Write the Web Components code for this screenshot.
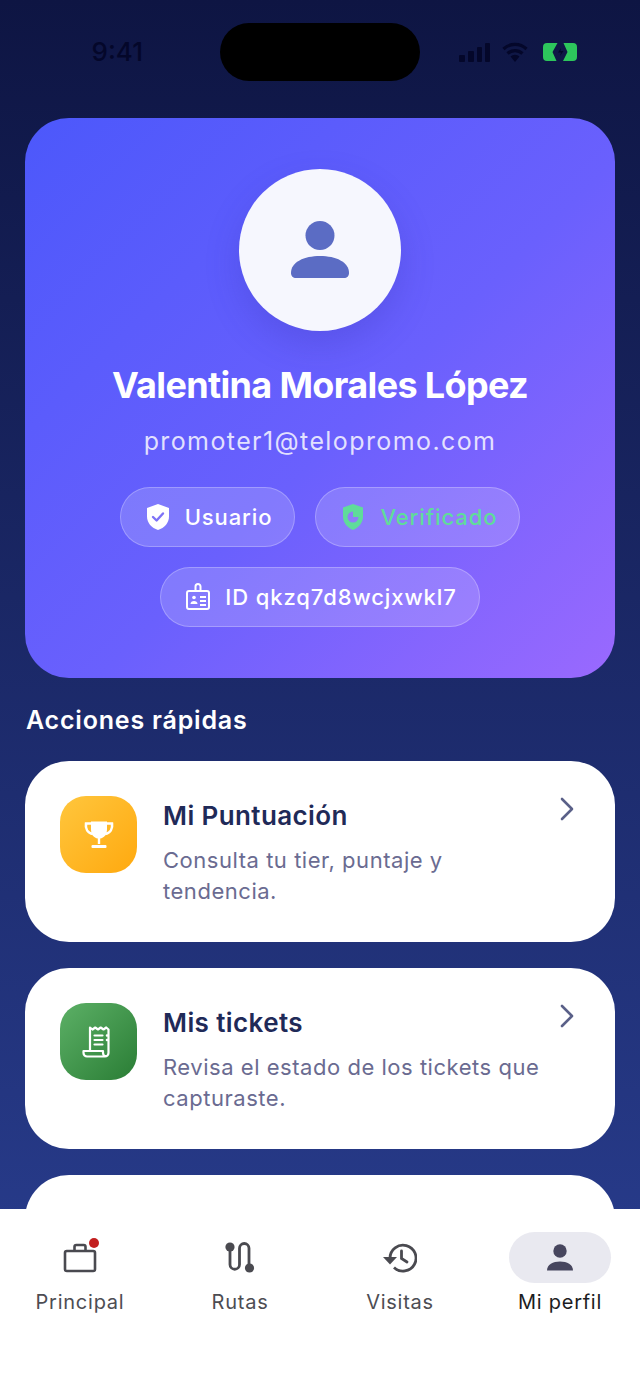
<!DOCTYPE html>
<html lang="es">
<head>
<meta charset="utf-8">
<title>Mi perfil</title>
<style>
  html, body { margin: 0; padding: 0; height: 100%; }
  body { font-family: Inter, "Liberation Sans", sans-serif; overflow: hidden; }
  [slot="icon"] { display: block; }
</style>
</head>
<body>
<profile-screen>
  <status-bar slot="status"></status-bar>

  <profile-hero slot="hero" name="Valentina Morales López" email="promoter1@telopromo.com">
    <info-pill>
      <svg slot="icon" width="26" height="28" viewBox="0 0 26 28"><path fill="#fff" d="M13 1 24 5v8.500c0 6.500-4.600 11.400-11 13.500C6.600 24.900 2 20 2 13.500V5z"/><path fill="none" stroke="#7d72f7" stroke-width="2.400" stroke-linecap="round" stroke-linejoin="round" d="m8 14 3.600 3.500L18 10.500"/></svg>
      Usuario
    </info-pill>
    <info-pill tone="ok">
      <svg slot="icon" width="26" height="28" viewBox="0 0 26 28"><path fill="#5fdc9a" d="M13 1 23 4.500v9c0 6.300-4.200 10.900-10 13.500C7.200 24.400 3 19.800 3 13.500v-9z"/><path fill="#8d7ff8" d="M13 8.500a5.500 5.500 0 1 0 5.500 5.500H13z"/></svg>
      Verificado
    </info-pill>
    <info-pill>
      <svg slot="icon" width="26" height="28" viewBox="0 0 26 28" fill="none" stroke="#fff" stroke-width="2"><rect x="2" y="8" width="22" height="18" rx="2"/><path d="M10.500 8V3.500a2.500 2.500 0 0 1 5 0V8"/><circle cx="9" cy="14.500" r="1.800" fill="#fff" stroke="none"/><path stroke="none" fill="#fff" d="M5.500 21c0-2 1.500-3 3.500-3s3.500 1 3.500 3z"/><path stroke-width="1.800" d="M15 14h6M15 18h6M15 22h6"/></svg>
      ID qkzq7d8wcjxwkl7
    </info-pill>
  </profile-hero>

  <span slot="section">Acciones rápidas</span>

  <action-card slot="actions" heading="Mi Puntuación" tone="gold">
    <svg slot="icon" width="32" height="32" viewBox="0 0 32 32"><path fill="none" stroke="#fff" stroke-width="2.600" d="M9 4.500H3c-.8 5 1.500 9.500 7 10.500M23 4.500h6c.8 5-1.500 9.500-7 10.500"/><path fill="#fff" d="M8 2.500h16V10c0 5.500-3 9-6.800 9.600V25h-2.400v-5.400C11 19 8 15.500 8 10z"/><rect x="8.500" y="26" width="15" height="3" rx="1" fill="#fff"/></svg>
    Consulta tu tier, puntaje y tendencia.
  </action-card>
  <action-card slot="actions" heading="Mis tickets" tone="green">
    <svg slot="icon" width="34" height="34" viewBox="0 0 34 34" fill="none" stroke="#fff" stroke-width="2.200" stroke-linejoin="round"><path d="M8 26V2.500l2.500 2 2.700-2 2.800 2 2.700-2 2.800 2 2.700-2 2.300 2V28a3.500 3.500 0 0 1-3.500 3.500H5a3.500 3.500 0 0 1-3.500-3.500v-2H21v2a3.500 3.500 0 0 0 3.500 3.500"/><path stroke-linecap="round" d="M12.500 10.500h8M12.500 15h8M12.500 19.500h8"/><path stroke-linecap="round" stroke-width="2.600" d="M25 10.500h.1M25 15h.1"/></svg>
    Revisa el estado de los tickets que capturaste.
  </action-card>
  <action-card slot="actions"></action-card>

  <bottom-nav slot="nav">
    <nav-item label="Principal" badge>
      <svg slot="icon" width="34" height="30" viewBox="0 0 34 30" fill="none" stroke="#4a4a50" stroke-width="2.600" stroke-linejoin="round"><rect x="2" y="8" width="30" height="20" rx="1.800"/><path d="M11.500 8V3.800c0-1 .8-1.800 1.800-1.800h7.400c1 0 1.800.8 1.800 1.800V8"/></svg>
    </nav-item>
    <nav-item label="Rutas">
      <svg slot="icon" width="30" height="32" viewBox="0 0 30 32" fill="none" stroke="#4a4a50" stroke-width="2.800" stroke-linecap="round"><path d="M5 5v17.500a4.750 4.750 0 0 0 9.500 0V6.250a4.750 4.750 0 0 1 9.500 0V26"/><circle cx="5" cy="5" r="4.600" fill="#4a4a50" stroke="none"/><circle cx="24.500" cy="26" r="4.600" fill="#4a4a50" stroke="none"/></svg>
    </nav-item>
    <nav-item label="Visitas">
      <svg slot="icon" width="34" height="30" viewBox="0 0 34 30" fill="none" stroke="#4a4a50" stroke-width="2.800"><path d="M7 15a13 13 0 1 1 4 9.500"/><path fill="#4a4a50" stroke="none" d="M0 14h14l-7 7.500z"/><path stroke-linecap="round" d="M18.500 8v7.500l5.500 3.500"/></svg>
    </nav-item>
    <nav-item label="Mi perfil" active>
      <svg slot="icon" width="28" height="28" viewBox="0 0 28 28" fill="#47465e"><circle cx="14" cy="7" r="6.700"/><path d="M1 26.500c0-6 6-9 13-9s13 3 13 9z"/></svg>
    </nav-item>
  </bottom-nav>
</profile-screen>

<script>
// pantalla completa, el contenido se corta donde empieza la barra inferior
class ProfileScreen extends HTMLElement {
  constructor() {
    super();
    this.attachShadow({ mode: 'open' }).innerHTML = `
      <style>
        :host {
          display: flex;
          flex-direction: column;
          height: 1391px;
          background: linear-gradient(180deg, #0e1543 0%, #2a3f92 100%);
          overflow: hidden;
        }
        .content {
          flex: 1;
          min-height: 0;
          overflow: hidden;
          display: flex;
          flex-direction: column;
          padding: 0 25px 0 26px;
        }
        .title {
          color: #fff;
          font: 600 25px/28px Inter, sans-serif;
          letter-spacing: .8px;
          margin: 28px 0 27px;
        }
        .list { display: flex; flex-direction: column; gap: 26px; }
      </style>
      <slot name="status"></slot>
      <div class="content">
        <slot name="hero"></slot>
        <div class="title"><slot name="section"></slot></div>
        <div class="list"><slot name="actions"></slot></div>
      </div>
      <slot name="nav"></slot>`;
  }
}

class StatusBar extends HTMLElement {
  constructor() {
    super();
    this.attachShadow({ mode: 'open' }).innerHTML = `
      <style>
        :host {
          display: grid;
          grid-template-columns: 220px 200px 220px;
          height: 118px;
          box-sizing: border-box;
          padding-top: 23px;
          flex: none;
        }
        .time {
          color: #04072a;
          font: 500 26px/58px Inter, sans-serif;
          text-align: right;
          padding-right: 77px;
        }
        .island { height: 58px; border-radius: 29px; background: #000; }
        .icons { display: flex; align-items: center; height: 58px; padding-left: 39px; }
        .wifi { margin-left: 11px; }
        .battery { margin-left: 15px; }
      </style>
      <div class="time">9:41</div>
      <div class="island"></div>
      <div class="icons">
        <svg width="32" height="20" viewBox="0 0 32 20" fill="#04072a"><rect x="0" y="13" width="6" height="7" rx="1"/><rect x="9" y="9" width="6" height="11" rx="1"/><rect x="18" y="5" width="5" height="15" rx="1"/><rect x="26" y="1" width="5" height="19" rx="1"/></svg>
        <svg class="wifi" width="26" height="20" viewBox="0 0 26 20" fill="none" stroke="#04072a" stroke-width="3.200"><path d="M1.500 7a16.500 16.500 0 0 1 23 0M5.500 11.500a11 11 0 0 1 15 0"/><path fill="#04072a" stroke="none" d="M8.500 14.500a6.500 6.500 0 0 1 9 0L13 20z"/></svg>
        <svg class="battery" width="34" height="18" viewBox="0 0 34 18"><path fill="#2dc65c" d="M4 0h10.500L9.500 9l4 9H4a4 4 0 0 1-4-4V4a4 4 0 0 1 4-4zM20.500 0H30a4 4 0 0 1 4 4v10a4 4 0 0 1-4 4H20l4.500-9z"/><path fill="#04072a" d="M18 5l-3 4.500h3l-1 3.500 3.500-5h-3z"/></svg>
      </div>`;
  }
}

// tarjeta azul con avatar, nombre y correo
class ProfileHero extends HTMLElement {
  constructor() {
    super();
    this.attachShadow({ mode: 'open' }).innerHTML = `
      <style>
        :host {
          display: flex;
          flex-direction: column;
          align-items: center;
          flex: none;
          height: 560px;
          box-sizing: border-box;
          padding-top: 51px;
          margin-left: -1px;
          border-radius: 44px;
          background: linear-gradient(135deg, #4c58fb 0%, #6a60fd 55%, #9a69fe 100%);
        }
        .avatar {
          width: 162px;
          height: 162px;
          border-radius: 50%;
          background: #f6f7fe;
          box-shadow: 0 14px 34px rgba(48, 44, 170, .22);
          display: flex;
          align-items: center;
          justify-content: center;
        }
        .name {
          color: #fff;
          font: 700 36px/40px Inter, sans-serif;
          letter-spacing: -.65px;
          margin-top: 34px;
        }
        .email {
          color: rgba(255, 255, 255, .82);
          font: 400 25px/30px Inter, sans-serif;
          letter-spacing: 1.4px;
          margin-top: 21px;
        }
        .pills {
          display: flex;
          flex-wrap: wrap;
          justify-content: center;
          gap: 20px;
          width: 440px;
          margin-top: 31px;
        }
      </style>
      <div class="avatar">
        <svg width="58" height="58" viewBox="0 0 58 58" fill="#5b6cc4"><circle cx="29" cy="14.500" r="14.500"/><path d="M0 52c0-11 13-17 29-17s29 6 29 17c0 3-2 5-5 5H5c-3 0-5-2-5-5z"/></svg>
      </div>
      <div class="name"></div>
      <div class="email"></div>
      <div class="pills"><slot></slot></div>`;
  }
  connectedCallback() {
    this.shadowRoot.querySelector('.name').textContent = this.getAttribute('name');
    this.shadowRoot.querySelector('.email').textContent = this.getAttribute('email');
  }
}

class InfoPill extends HTMLElement {
  constructor() {
    super();
    this.attachShadow({ mode: 'open' }).innerHTML = `
      <style>
        :host {
          display: flex;
          align-items: center;
          gap: 14px;
          height: 60px;
          box-sizing: border-box;
          padding: 0 22px 0 24px;
          border-radius: 30px;
          border: 1.500px solid rgba(255, 255, 255, .25);
          background: rgba(255, 255, 255, .17);
          color: #fff;
          font: 500 22px/28px Inter, sans-serif;
          letter-spacing: .9px;
        }
        :host([tone="ok"]) { color: #5fdc9a; }
      </style>
      <slot name="icon"></slot>
      <span><slot></slot></span>`;
  }
}

class ActionCard extends HTMLElement {
  constructor() {
    super();
    this.attachShadow({ mode: 'open' }).innerHTML = `
      <style>
        :host {
          display: grid;
          grid-template-columns: 103px 1fr 24px;
          height: 181px;
          flex: none;
          box-sizing: border-box;
          padding: 35px 36px 0 35px;
          margin-left: -1px;
          border-radius: 44px;
          background: #fff;
        }
        .icon {
          width: 77px;
          height: 77px;
          border-radius: 26px;
          display: flex;
          align-items: center;
          justify-content: center;
        }
        :host([tone="gold"]) .icon { background: linear-gradient(135deg, #ffc63d, #ffa90f); }
        :host([tone="green"]) .icon { background: linear-gradient(135deg, #5cb066, #2a7d35); }
        h3 {
          margin: 3px 0 12px;
          color: #1f2a58;
          font: 600 26px/34px Inter, sans-serif;
          letter-spacing: .4px;
        }
        p {
          margin: 0;
          color: #6a6b91;
          font: 400 22px/31px Inter, sans-serif;
          letter-spacing: .53px;
        }
        .chevron { margin-top: 1px; }
      </style>
      <div class="icon"><slot name="icon"></slot></div>
      <div>
        <h3></h3>
        <p><slot></slot></p>
      </div>
      <svg class="chevron" width="24" height="24" viewBox="0 0 24 24" fill="none" stroke="#5a6088" stroke-width="2.600" stroke-linecap="round" stroke-linejoin="round"><path d="m7 2 10 10L7 22"/></svg>`;
  }
  connectedCallback() {
    this.shadowRoot.querySelector('h3').textContent = this.getAttribute('heading') || '';
  }
}

class BottomNav extends HTMLElement {
  constructor() {
    super();
    this.attachShadow({ mode: 'open' }).innerHTML = `
      <style>
        :host {
          display: grid;
          grid-template-columns: repeat(4, 1fr);
          height: 182px;
          flex: none;
          box-sizing: border-box;
          padding-top: 23px;
          background: #fff;
          position: relative;
        }
      </style>
      <slot></slot>`;
  }
}

class NavItem extends HTMLElement {
  constructor() {
    super();
    this.attachShadow({ mode: 'open' }).innerHTML = `
      <style>
        :host {
          display: flex;
          flex-direction: column;
          align-items: center;
          gap: 4px;
          color: #4d4d53;
          font: 400 20px/30px Inter, sans-serif;
          letter-spacing: .75px;
        }
        :host([active]) { color: #1c1c22; }
        .icon {
          position: relative;
          width: 102px;
          height: 51px;
          border-radius: 26px;
          display: flex;
          align-items: center;
          justify-content: center;
        }
        :host([active]) .icon { background: #e9e9f0; }
        .dot {
          display: none;
          position: absolute;
          left: 60px;
          top: 6px;
          width: 10px;
          height: 10px;
          border-radius: 50%;
          background: #c21f1f;
        }
        :host([badge]) .dot { display: block; }
      </style>
      <div class="icon"><slot name="icon"></slot><span class="dot"></span></div>
      <span class="label"></span>`;
  }
  connectedCallback() {
    this.shadowRoot.querySelector('.label').textContent = this.getAttribute('label');
  }
}

customElements.define('profile-screen', ProfileScreen);
customElements.define('status-bar', StatusBar);
customElements.define('profile-hero', ProfileHero);
customElements.define('info-pill', InfoPill);
customElements.define('action-card', ActionCard);
customElements.define('bottom-nav', BottomNav);
customElements.define('nav-item', NavItem);
</script>
</body>
</html>
